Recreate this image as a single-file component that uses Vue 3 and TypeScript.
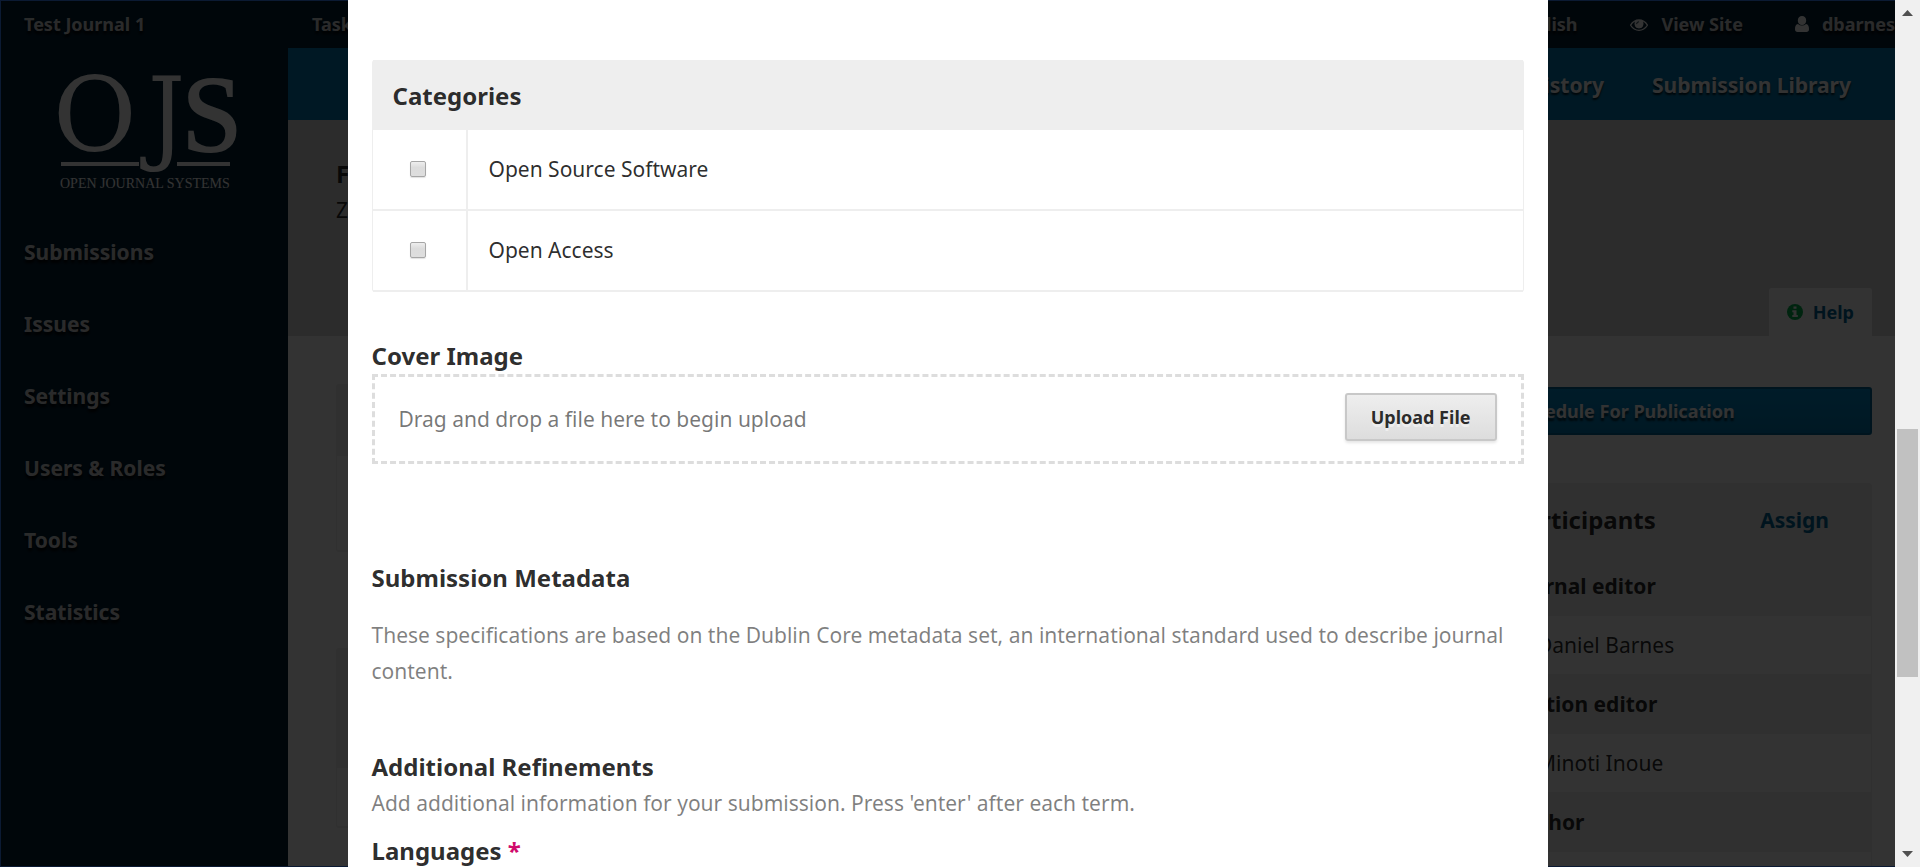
<script setup lang="ts">
import { ref } from 'vue'

interface Category {
  id: string
  name: string
  checked: boolean
}

interface Role {
  role: string
  person: string
}

const navItems: string[] = ['Submissions', 'Issues', 'Settings', 'Users & Roles', 'Tools', 'Statistics']

const categories = ref<Category[]>([
  { id: 'cat-oss', name: 'Open Source Software', checked: false },
  { id: 'cat-oa', name: 'Open Access', checked: false },
])

const roles: Role[] = [
  { role: 'Journal editor', person: 'Daniel Barnes' },
  { role: 'Section editor', person: 'Minoti Inoue' },
  { role: 'Author', person: 'Zita Woods' },
]
</script>

<template>
  <div class="window">
    <div class="viewport">
      <div class="page">
        <header class="topbar">
          <a class="journal" href="#">Test Journal 1</a>
          <a class="tasks" href="#">Tasks</a>
          <nav class="user-nav">
            <a href="#">English</a>
            <a href="#">
              <svg class="eye" viewBox="0 0 1792 1280" aria-hidden="true">
                <path d="M1664 704q-152-236-381-353 61 104 61 225 0 185-131.500 316.500T896 1024 579.500 892.500 448 576q0-121 61-225-229 117-381 353 133 205 333.500 326.500T896 1152t434.500-121.500T1664 704zM944 320q0-20-14-34t-34-14q-125 0-214.500 89.500T592 576q0 20 14 34t34 14 34-14 14-34q0-86 61-147t147-61q20 0 34-14t14-34zm848 384q0 34-20 69-140 230-376.500 368.500T896 1280t-499.500-139T20 773Q0 738 0 704t20-69q140-229 376.500-368T896 128t499.500 139T1772 635q20 35 20 69z" />
                <circle class="pupil" cx="896" cy="620" r="400" />
                <path class="glint" d="M660 600a230 230 0 0 1 230-230" />
              </svg>
              View Site
            </a>
            <a href="#">
              <svg class="user" viewBox="0 0 14 16" aria-hidden="true">
                <path d="M7 0a4.300 4.300 0 0 1 4.200 4.500A4.300 4.300 0 0 1 7 9a4.300 4.300 0 0 1-4.200-4.500A4.300 4.300 0 0 1 7 0zM3 8a6 6 0 0 0 8 0c2.300.2 3 2.600 3 5.200 0 1.700-1 2.800-2.600 2.800H2.600C1 16 0 14.900 0 13.200 0 10.600.7 8.200 3 8z" />
              </svg>
              dbarnes
            </a>
          </nav>
        </header>

        <div class="columns">
          <aside class="sidebar">
            <svg class="logo" viewBox="0 0 178 120" role="img" aria-label="Open Journal Systems">
              <text class="letter-o" x="-4" y="77">O</text>
              <text class="letter-j" x="91" y="77">J</text>
              <text class="letter-s" x="125" y="77">S</text>
              <rect x="4" y="88" width="78" height="4" />
              <rect x="120" y="88" width="53" height="4" />
              <text class="tagline" x="3" y="114">OPEN JOURNAL SYSTEMS</text>
            </svg>
            <nav class="side-nav">
              <a v-for="item in navItems" :key="item" href="#">{{ item }}</a>
            </nav>
          </aside>

          <main class="main">
            <nav class="actions">
              <a href="#">Editorial History</a>
              <a href="#">Submission Library</a>
            </nav>
            <div class="summary">
              <div class="summary-text">
                <h1>Finocchiaro</h1>
                <p>Zita Woods</p>
              </div>
              <a class="help" href="#">
                <svg viewBox="0 0 16 16" aria-hidden="true">
                  <circle cx="8" cy="8" r="8" />
                  <path d="M6.500 2.500h3v2.200h-3zM5.300 6.300h4.200v4.800h1.300v2H5.300v-2h1.200V8.300H5.300z" />
                </svg>
                Help
              </a>
            </div>
            <div class="workspace">
              <div class="stage">
                <section class="panel short"></section>
                <section class="panel tall"></section>
              </div>
              <div class="rail">
                <button class="schedule" type="button">Schedule For Publication</button>
                <section class="participants">
                  <div class="participants-head">
                    <h2>Participants</h2>
                    <a href="#">Assign</a>
                  </div>
                  <template v-for="entry in roles" :key="entry.role">
                    <h3>{{ entry.role }}</h3>
                    <p>{{ entry.person }}</p>
                  </template>
                </section>
              </div>
            </div>
          </main>
        </div>
      </div>

      <div class="overlay">
        <form class="modal" @submit.prevent>
          <table class="categories">
            <thead>
              <tr>
                <th colspan="2">Categories</th>
              </tr>
            </thead>
            <tbody>
              <tr v-for="category in categories" :key="category.id">
                <td class="tick"><input :id="category.id" v-model="category.checked" type="checkbox" /></td>
                <td><label :for="category.id">{{ category.name }}</label></td>
              </tr>
            </tbody>
          </table>

          <section class="cover">
            <h2>Cover Image</h2>
            <div class="dropzone">
              <span>Drag and drop a file here to begin upload</span>
              <button class="upload" type="button">Upload File</button>
            </div>
          </section>

          <section class="metadata">
            <h2>Submission Metadata</h2>
            <p>These specifications are based on the Dublin Core metadata set, an international standard used to describe journal content.</p>
          </section>

          <section class="refinements">
            <h2>Additional Refinements</h2>
            <p>Add additional information for your submission. Press 'enter' after each term.</p>
            <h2 class="languages">Languages <span>*</span></h2>
          </section>
        </form>
      </div>
    </div>

    <div class="scrollbar" aria-hidden="true">
      <svg viewBox="0 0 11 6"><path d="M0 6 5.500 0 11 6z" /></svg>
      <div class="track"><div class="thumb"></div></div>
      <svg viewBox="0 0 11 6"><path d="M0 0h11L5.500 6z" /></svg>
    </div>
  </div>
</template>

<style>
body {
  margin: 0;
}
</style>

<style scoped>
* {
  box-sizing: border-box;
}

.window {
  display: flex;
  height: 100vh;
  overflow: hidden;
  font-family: 'Noto Sans', sans-serif;
  font-size: 21px;
  line-height: 36px;
  color: rgba(0, 0, 0, 0.84);
}

h1,
h2,
h3,
p {
  margin: 0;
}

h1,
h2 {
  font-size: 24px;
  line-height: 36px;
  font-weight: 700;
}

a {
  text-decoration: none;
  color: #006798;
}

.viewport {
  position: relative;
  flex: 1;
  min-width: 0;
  overflow: hidden;
}

.page {
  display: flex;
  flex-direction: column;
  height: 100%;
}

.topbar {
  display: flex;
  height: 48px;
  flex: none;
  align-items: center;
  background: #002035;
  font-size: 18px;
  font-weight: 700;
  line-height: 48px;
  white-space: nowrap;
}

.topbar a {
  color: rgba(255, 255, 255, 0.84);
  text-shadow: 0 3px 3px #000;
}

.journal {
  width: 288px;
  padding-left: 24px;
}

.tasks {
  padding-left: 24px;
}

.user-nav {
  display: flex;
  flex: 1;
  justify-content: flex-end;
  gap: 52px;
}

.user-nav a {
  display: flex;
  align-items: center;
}

.user-nav svg {
  fill: #fff;
}

.eye {
  width: 18px;
  height: 13px;
  margin-right: 14px;
}

.user-nav .glint {
  fill: none;
  stroke: #002035;
  stroke-width: 90;
}

.user {
  width: 14px;
  height: 16px;
  margin-right: 13px;
}

.columns {
  display: flex;
  flex: 1;
  min-height: 0;
}

.sidebar {
  flex: none;
  width: 288px;
  background: #002035;
}

.logo {
  display: block;
  width: 178px;
  height: 120px;
  margin: 26px 0 0 57px;
  overflow: visible;
  fill: #fff;
}

.letter-o {
  font-family: 'DejaVu Serif', serif;
  font-size: 102px;
}

.letter-j {
  font-family: 'DejaVu Serif Condensed', 'DejaVu Serif', serif;
  font-size: 102px;
}

.letter-s {
  font-family: 'Liberation Serif', serif;
  font-size: 108px;
  stroke: #fff;
  stroke-width: 2px;
}

.tagline {
  font-family: 'Liberation Serif', serif;
  font-size: 14px;
}

.side-nav {
  display: flex;
  flex-direction: column;
  margin-top: 22px;
}

.side-nav a {
  padding: 18px 24px;
  font-weight: 700;
  color: rgba(255, 255, 255, 0.84);
  text-shadow: 0 3px 3px #000;
}

.main {
  display: flex;
  flex: 1;
  flex-direction: column;
  min-width: 0;
  background: #fff;
}

.actions {
  display: flex;
  flex: none;
  justify-content: flex-end;
  gap: 48px;
  padding: 19px 44px 17px;
  background: #007ab2;
  font-weight: 700;
}

.actions a {
  color: #fff;
  text-shadow: 0 2px 2px rgba(0, 0, 0, 0.8);
}

.summary {
  display: flex;
  flex: none;
  justify-content: space-between;
  height: 216px;
  padding: 36px 23px 0 48px;
  background: #ddd;
}

.help {
  display: flex;
  gap: 10px;
  align-items: center;
  align-self: flex-end;
  height: 48px;
  padding: 0 18px;
  border-radius: 3px 3px 0 0;
  background: #fff;
  font-size: 18px;
  font-weight: 700;
}

.help svg {
  width: 16px;
  height: 16px;
  fill: #00b24e;
}

.help path {
  fill: #fff;
}

.workspace {
  display: flex;
  gap: 48px;
  padding: 48px 23px 0 48px;
}

.stage {
  display: flex;
  flex: 1;
  flex-direction: column;
  gap: 96px;
}

.panel {
  border: 1px solid #eee;
  border-bottom-width: 2px;
  border-radius: 3px;
}

.short {
  height: 168px;
  border-top: 72px solid #eee;
}

.tall {
  height: 180px;
  border-top: 120px solid #eee;
}

.rail {
  flex: none;
  width: 384px;
}

.schedule {
  display: block;
  width: 100%;
  height: 48px;
  margin: 3px 0 48px;
  padding: 0 24px;
  border: 2px solid #006798;
  border-radius: 3px;
  background: linear-gradient(#008acb, #007ab2);
  color: #fff;
  font: 700 18px/44px 'Noto Sans', sans-serif;
  text-align: left;
  text-shadow: 0 3px 2px rgba(0, 0, 0, 0.7);
}

.participants {
  border: 1px solid #eee;
  border-radius: 3px;
}

.participants-head {
  display: flex;
  align-items: center;
  justify-content: space-between;
  height: 72px;
  padding: 0 42px 0 22px;
  background: #eee;
}

.participants-head a {
  font-weight: 700;
}

.participants h3 {
  padding: 12px 22px;
  background: #eee;
  font-size: 21px;
  line-height: 36px;
}

.participants p {
  padding: 11px 48px;
}

.overlay {
  position: absolute;
  inset: 0;
  display: flex;
  justify-content: center;
  overflow: hidden;
  background: rgba(0, 0, 0, 0.8);
  box-shadow: inset 1px 1px #0b1a33, inset 0 -1px #0b1a33;
}

.modal {
  flex: none;
  width: 1200px;
  max-width: 100%;
  padding: 60px 24px 0;
  background: #fff;
}

.categories {
  width: 100%;
  border: 1px solid #eee;
  border-width: 0 1px;
  border-radius: 3px;
  border-spacing: 0;
}

.categories th {
  padding: 18px 20px 16px;
  background: #eee;
  font-size: 24px;
  text-align: left;
}

.categories td {
  height: 81px;
  padding: 0 21px 2px;
  border-bottom: 2px solid #eee;
}

.categories .tick {
  width: 95px;
  padding: 0 2px 2px 0;
  border-right: 2px solid #eee;
  line-height: 0;
  text-align: center;
}

.tick input {
  width: 16px;
  height: 16px;
  margin: 0;
  appearance: none;
  border: 1px solid #a6a6a6;
  border-radius: 2px;
  background: linear-gradient(#eee, #dcdcdc 40%, #dedede);
  box-shadow: 0 1px 1px rgba(0, 0, 0, 0.12);
}

.cover {
  margin-top: 46px;
}

.dropzone {
  display: flex;
  align-items: flex-start;
  justify-content: space-between;
  padding: 16px 24px 20px;
  border: 3px dashed #ddd;
  color: rgba(0, 0, 0, 0.54);
}

.dropzone span {
  padding-top: 8px;
}

.upload {
  height: 48px;
  padding: 0 24px;
  border: 2px solid #c8c8c8;
  border-radius: 3px;
  background: linear-gradient(#eee, #ddd);
  box-shadow: 0 2px 3px rgba(0, 0, 0, 0.1);
  color: rgba(0, 0, 0, 0.84);
  font: 700 18px/44px 'Noto Sans', sans-serif;
  text-shadow: 0 3px 0 #eee;
}

.metadata {
  margin-top: 96px;
}

.metadata p {
  margin-top: 21px;
}

.metadata p,
.refinements p {
  color: rgba(0, 0, 0, 0.5);
}

.refinements {
  margin-top: 60px;
}

.languages {
  margin-top: 12px;
}

.languages span {
  color: #d00a6c;
}

.scrollbar {
  display: flex;
  flex: none;
  flex-direction: column;
  align-items: center;
  width: 25px;
  padding: 10px 0;
  background: #f0f0f0;
}

.scrollbar svg {
  width: 11px;
  height: 6px;
  fill: #505050;
}

.track {
  display: grid;
  flex: 1;
  grid-template-rows: 413fr 248fr 174fr;
  width: 21px;
}

.thumb {
  grid-row: 2;
  background: #c1c1c1;
}
</style>
